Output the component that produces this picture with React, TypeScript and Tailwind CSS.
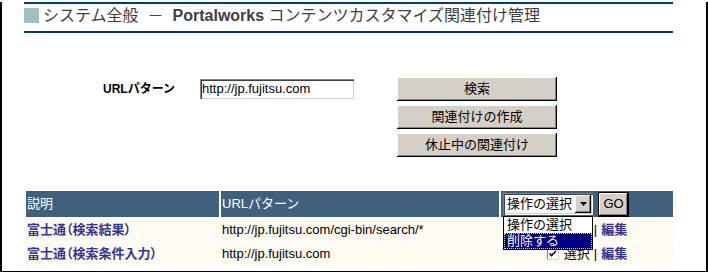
import React from 'react';

const FONT = '"Liberation Sans", "Noto Sans CJK JP", sans-serif';

function Checkbox() {
  return (
    <svg width="12" height="12" viewBox="0 0 12 12" className="inline-block align-middle">
      <rect x="0" y="0" width="12" height="12" fill="#fff" />
      <path d="M0.5 11.5V0.5H11.5" fill="none" stroke="#808080" strokeWidth="1" />
      <path d="M11.5 0.5V11.5H0.5" fill="none" stroke="#d4d0c8" strokeWidth="1" />
      <path d="M2.5 5.5L4.5 7.5L9 3" fill="none" stroke="#000" strokeWidth="1.6" />
    </svg>
  );
}

function ActionCell() {
  return (
    <div className="flex items-center justify-center text-[13px] text-black">
      <Checkbox />
      <span className="ml-[5px]">選択</span>
      <span className="mx-[4px]">|</span>
      <a className="font-bold text-[#333399]">編集</a>
    </div>
  );
}

export default function App() {
  const rows = [
    { name: '富士通（検索結果）', url: 'http://jp.fujitsu.com/cgi-bin/search/*' },
    { name: '富士通（検索条件入力）', url: 'http://jp.fujitsu.com' },
  ];

  return (
    <div className="w-[708px] h-[272px] bg-white overflow-hidden" style={{ fontFamily: FONT }}>
      <div className="h-[271px] border-l-2 border-r-2 border-b-2 border-black">
        {/* title */}
        <div className="ml-[22px] mt-[2px] w-[649px] h-[31px] border-t-2 border-b-2 border-[#003b7b] flex items-start pt-[4px]">
          <div className="w-[15px] h-[15px] bg-[#a0c0c0] shrink-0" />
          <div className="ml-[4px] text-[16px] leading-[16px] text-[#404040] whitespace-nowrap">
            システム全般<span className="mx-[9px]">－</span>
            <span className="font-bold">Portalworks</span> コンテンツカスタマイズ関連付け管理
          </div>
        </div>

        {/* search form */}
        <div className="mt-[44px] flex items-start pl-[101px]">
          <div className="w-[97px] h-[20px] mt-[2px] flex items-center text-[12px] font-bold text-black">
            URLパターン
          </div>
          <div className="w-[154px] h-[20px] mt-[2px] bg-white shadow-[inset_1px_1px_#808080,inset_2px_2px_#404040,inset_-1px_-1px_#d4d0c8] flex items-center pl-[2px] text-[13px] text-black">
            http://jp.fujitsu.com
          </div>
          <div className="ml-[43px] flex flex-col gap-[4px]">
            {['検索', '関連付けの作成', '休止中の関連付け'].map((label) => (
              <button
                key={label}
                className="w-[160px] h-[24px] bg-[#d4d0c8] text-[13px] text-black shadow-[inset_-1px_-1px_#000,inset_1px_1px_#fff,inset_-2px_-2px_#808080] flex items-center justify-center pb-[1px]"
              >
                {label}
              </button>
            ))}
          </div>
        </div>

        {/* list */}
        <table className="mt-[32px] ml-[22px] border-separate border-spacing-[2px] text-[13px]">
          <colgroup>
            <col className="w-[193px]" />
            <col className="w-[278px]" />
            <col className="w-[172px]" />
          </colgroup>
          <thead>
            <tr className="h-[26px] bg-[#3f607f] text-white">
              <th className="font-normal text-left pl-[1px] p-0">説明</th>
              <th className="font-normal text-left pl-[1px] p-0">URLパターン</th>
              <th className="font-normal text-left p-0">
                <div className="flex items-center pl-[2px]">
                  <div className="relative">
                    <div className="w-[90px] h-[22px] bg-white shadow-[inset_1px_1px_#808080,inset_2px_2px_#404040,inset_-1px_-1px_#fff,inset_-2px_-2px_#d4d0c8] flex items-center pl-[4px] text-black">
                      <span>操作の選択</span>
                      <div className="ml-auto mr-[2px] w-[16px] h-[18px] bg-[#d4d0c8] shadow-[inset_-1px_-1px_#000,inset_1px_1px_#fff,inset_-2px_-2px_#808080] flex items-center justify-center">
                        <svg width="7" height="4" viewBox="0 0 7 4">
                          <path d="M0 0H7L3.5 4Z" fill="#000" />
                        </svg>
                      </div>
                    </div>
                    <div className="absolute left-0 top-[23px] w-[90px] h-[34px] bg-white border border-black z-10 text-black">
                      <div className="h-[16px] leading-[16px] pl-[3px]">操作の選択</div>
                      <div className="h-[16px] leading-[14px] pl-[2px] bg-[#000080] text-white border border-dotted border-[#e0e080]">
                        削除する
                      </div>
                    </div>
                  </div>
                  <button className="ml-[5px] w-[31px] h-[25px] bg-[#d4d0c8] border border-black shadow-[inset_-1px_-1px_#000,inset_1px_1px_#fff,inset_-2px_-2px_#808080] text-[13px] text-black flex items-center justify-center">
                    GO
                  </button>
                </div>
              </th>
            </tr>
          </thead>
          <tbody>
            {rows.map((r) => (
              <tr key={r.name} className="h-[22px] bg-[#fffaf0]">
                <td className="p-0 pl-[1px] font-bold text-[#333399] whitespace-nowrap [font-feature-settings:'palt']">
                  {r.name}
                </td>
                <td className="p-0 pl-[1px] text-black whitespace-nowrap">{r.url}</td>
                <td className="p-0">
                  <ActionCell />
                </td>
              </tr>
            ))}
          </tbody>
        </table>
      </div>
    </div>
  );
}
